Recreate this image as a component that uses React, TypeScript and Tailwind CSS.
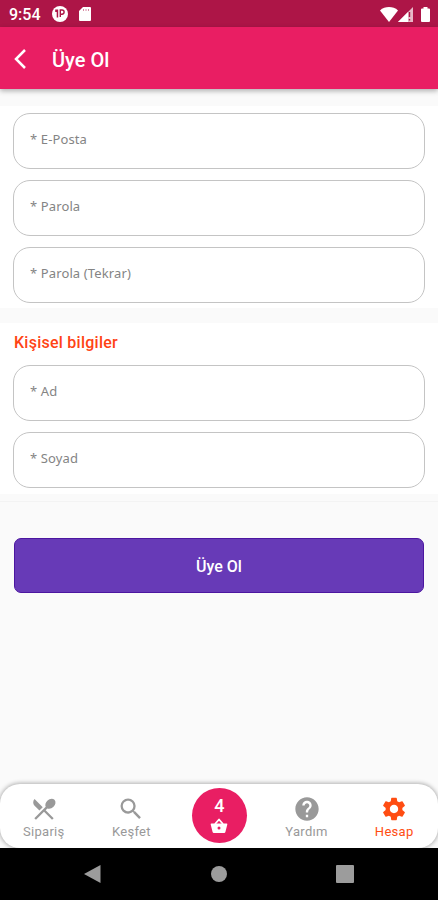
import { clsx } from 'clsx';
import type { IconType } from 'react-icons';
import { MdHelp, MdRestaurantMenu, MdSearch, MdSettings } from 'react-icons/md';

interface FieldProps {
  label: string;
}

interface NavItemProps {
  icon: IconType;
  label: string;
  active?: boolean;
}

function StatusBar() {
  return (
    <div className="flex h-[27px] items-center justify-between bg-[#ad1547] pl-[9px] pr-[8px] pt-px text-white">
      <div className="flex items-center">
        <span className="w-[43px] pt-px text-[16px] font-medium leading-none">9:54</span>
        <svg className="h-4 w-4" viewBox="0 0 16 16">
          <circle cx="8" cy="8" r="8" fill="white" />
          <path d="M3.200 3.500h3v8h-1.500v-5.500h-1.500z" fill="#ad1547" />
          <path d="M8.300 11V4h1.700a2 2 0 0 1 0 4.200H8.300" fill="none" stroke="#ad1547" strokeWidth="1.4" />
        </svg>
        <svg className="ml-[11px] h-[14px] w-3" viewBox="0 0 12 14">
          <path d="M4 0h7a1 1 0 0 1 1 1v12a1 1 0 0 1-1 1H1a1 1 0 0 1-1-1V4z" fill="white" />
          <path d="M4.5 2v2M7 2v2M9.5 2v2" stroke="#d78aa3" strokeWidth="1" />
        </svg>
      </div>
      <div className="flex items-center">
        <svg className="h-[15px] w-[18px]" viewBox="0 0 18 15">
          <path d="M0 3.4C5 -1 13 -1 18 3.4L9 15z" fill="white" />
        </svg>
        <svg className="h-[15px] w-[15px]" viewBox="0 0 15 15">
          <path d="M15 0v15H0z" fill="#e7b9c8" />
          <path d="M10 5v10H0z" fill="white" />
          <path d="M11.500 5v5M11.500 12v1.500" stroke="#ad1547" strokeWidth="1.4" />
        </svg>
        <svg className="ml-2 h-[15px] w-[9px]" viewBox="0 0 9 15">
          <path d="M2.5 0h4v1.5H8a1 1 0 0 1 1 1V14a1 1 0 0 1-1 1H1a1 1 0 0 1-1-1V2.500a1 1 0 0 1 1-1h1.500z" fill="white" />
        </svg>
      </div>
    </div>
  );
}

function AppBar() {
  return (
    <header className="relative z-10 flex h-[62px] items-center bg-[#e91e63] pl-[14px] pt-[2px] text-white shadow-[0_2px_5px_rgba(0,0,0,0.3)]">
      <button type="button" aria-label="Geri" className="w-[38px]">
        <svg className="h-5 w-3" viewBox="0 0 12 20" fill="none" stroke="currentColor" strokeWidth="2.5">
          <path d="M11 1L2 10l9 9" />
        </svg>
      </button>
      <h1 className="pt-[2px] text-[20px] font-medium leading-6">Üye Ol</h1>
    </header>
  );
}

function Field({ label }: FieldProps) {
  return (
    <input
      type="text"
      placeholder={label}
      className="block h-14 w-full rounded-[17px] border border-[#c4c4c4] bg-white px-[16px] pb-[5px] font-['Noto_Sans',sans-serif] text-[13px] tracking-[0.12px] outline-none placeholder:text-[#848484]"
    />
  );
}

function BasketIcon() {
  return (
    <svg className="mt-[2px] h-4 w-[18px]" viewBox="0 0 18 16" fill="currentColor">
      <path d="M5 6l4-4.500L13 6" fill="none" stroke="currentColor" strokeWidth="1.8" strokeLinejoin="round" />
      <path
        fillRule="evenodd"
        d="M1.500 5.500h15a.8.8 0 0 1 .8 1L15.400 14a1.300 1.300 0 0 1-1.300 1H3.900a1.300 1.300 0 0 1-1.300-1L.7 6.500a.8.8 0 0 1 .8-1zM9 8.500a1.500 1.500 0 1 0 0 3 1.500 1.500 0 0 0 0-3z"
      />
    </svg>
  );
}

function NavItem({ icon: Icon, label, active = false }: NavItemProps) {
  return (
    <button
      type="button"
      className={clsx(
        'flex flex-col items-center pt-[11px]',
        active ? 'text-[#ff4d12]' : 'text-[#999999]'
      )}
    >
      <Icon className="h-7 w-7" />
      <span className="pt-px text-[13px] leading-4 tracking-[0.3px]">{label}</span>
    </button>
  );
}

function BottomNav() {
  return (
    <nav className="grid h-16 grid-cols-5 rounded-[20px] bg-white shadow-[0_0_4px_1px_rgba(0,0,0,0.3)]">
      <NavItem icon={MdRestaurantMenu} label="Sipariş" />
      <NavItem icon={MdSearch} label="Keşfet" />
      <button
        type="button"
        className="ml-px mt-[4px] flex h-[55px] w-[55px] flex-col items-center justify-self-center rounded-full bg-[#e91e63] pt-[8px] text-white"
      >
        <span className="text-[18px] font-medium leading-5">4</span>
        <BasketIcon />
      </button>
      <NavItem icon={MdHelp} label="Yardım" />
      <NavItem icon={MdSettings} label="Hesap" active />
    </nav>
  );
}

function SystemNav() {
  return (
    <div className="relative z-10 flex h-[52px] items-center justify-between bg-black pl-[84px] pr-[84px]">
      <svg className="h-[18px] w-[17px]" viewBox="0 0 17 18">
        <path d="M16.500 0v18L0 9z" fill="#9c9c9c" />
      </svg>
      <span className="ml-px h-4 w-4 rounded-full bg-[#9c9c9c]" />
      <span className="h-[18px] w-[18px] rounded-[1px] bg-[#9c9c9c]" />
    </div>
  );
}

export default function App() {
  return (
    <div className="flex h-[900px] w-[438px] flex-col overflow-hidden bg-[#fafafa] font-[Roboto,sans-serif]">
      <StatusBar />
      <AppBar />
      <main className="flex flex-1 flex-col pt-[17px]">
        <section className="flex h-[202px] flex-col gap-[11px] bg-white px-[13px] pt-[7px]">
          <Field label="* E-Posta" />
          <Field label="* Parola" />
          <Field label="* Parola (Tekrar)" />
        </section>
        <section className="mt-[15px] h-[171px] bg-white px-[13px] pt-[10px]">
          <h2 className="h-[32px] pl-px text-[16px] font-medium leading-[20px] tracking-[0.25px] text-[#ff4314]">
            Kişisel bilgiler
          </h2>
          <div className="flex flex-col gap-[11px]">
            <Field label="* Ad" />
            <Field label="* Soyad" />
          </div>
        </section>
        <div className="mt-[7px] border-t border-[#f3f3f3] px-[14px] pt-[36px]">
          <button
            type="button"
            className="h-[55px] w-full rounded-[7px] border border-[#4c16a0] bg-[#673ab7] pt-[2px] text-[16px] font-medium text-white"
          >
            Üye Ol
          </button>
        </div>
      </main>
      <BottomNav />
      <SystemNav />
    </div>
  );
}
